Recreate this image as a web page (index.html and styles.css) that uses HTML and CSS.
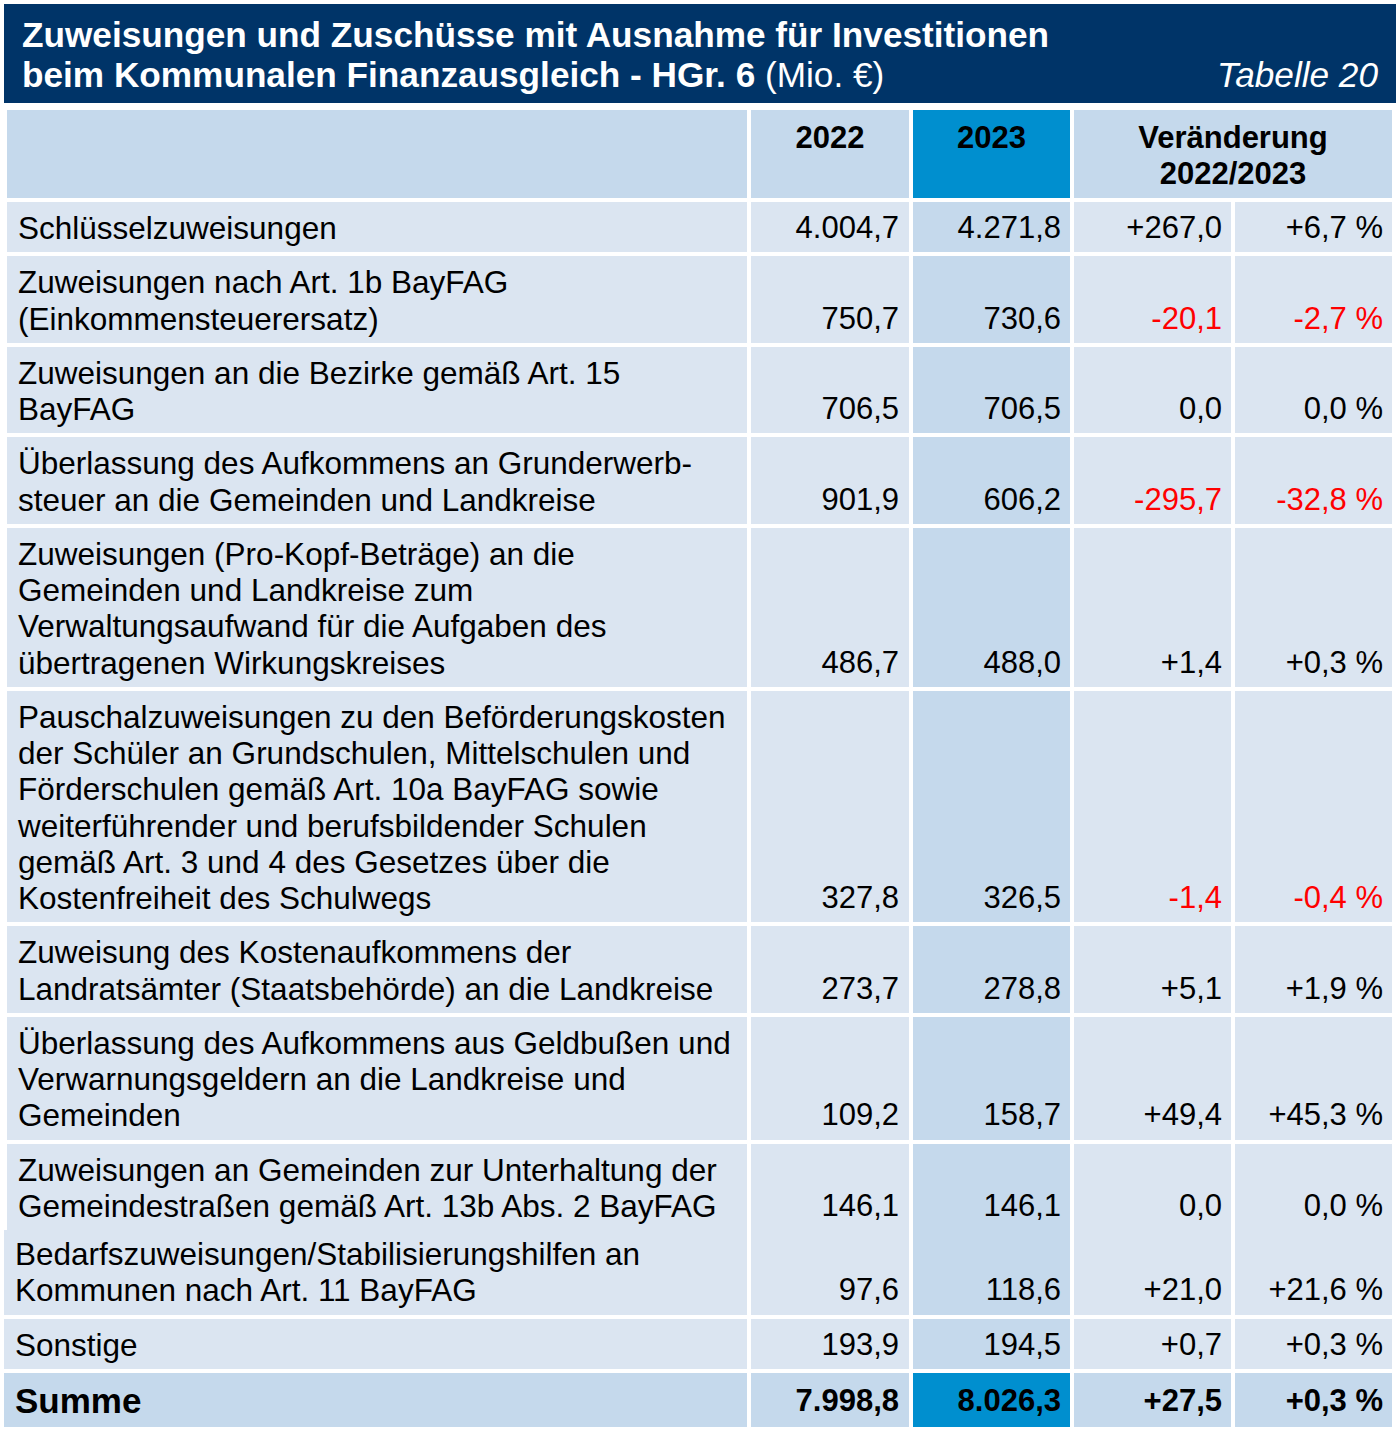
FILE: index.html
```html
<!DOCTYPE html>
<html lang="de">
<head>
<meta charset="utf-8">
<title>Tabelle 20</title>
<link rel="stylesheet" href="styles.css">
</head>
<body>
<div class="page">
  <header class="title">
    <div class="title-line">Zuweisungen und Zuschüsse mit Ausnahme für Investitionen</div>
    <div class="title-line split">
      <span>beim Kommunalen Finanzausgleich - HGr. 6 <span class="unit">(Mio. €)</span></span>
      <span class="tab-no">Tabelle 20</span>
    </div>
  </header>

  <div class="table">
    <div class="row head">
      <div class="cell label"></div>
      <div class="cell hcell">2022</div>
      <div class="cell hcell cur">2023</div>
      <div class="cell hcell span2">Veränderung<br>2022/2023</div>
    </div>

    <div class="row">
      <div class="cell label">Schlüsselzuweisungen</div>
      <div class="cell num c2">4.004,7</div>
      <div class="cell num cur">4.271,8</div>
      <div class="cell num">+267,0</div>
      <div class="cell num">+6,7 %</div>
    </div>

    <div class="row">
      <div class="cell label">Zuweisungen nach Art. 1b BayFAG<br>(Einkommensteuerersatz)</div>
      <div class="cell num c2">750,7</div>
      <div class="cell num cur">730,6</div>
      <div class="cell num neg">-20,1</div>
      <div class="cell num neg">-2,7 %</div>
    </div>

    <div class="row">
      <div class="cell label">Zuweisungen an die Bezirke gemäß Art. 15<br>BayFAG</div>
      <div class="cell num c2">706,5</div>
      <div class="cell num cur">706,5</div>
      <div class="cell num">0,0</div>
      <div class="cell num">0,0 %</div>
    </div>

    <div class="row">
      <div class="cell label">Überlassung des Aufkommens an Grunderwerb-<br>steuer an die Gemeinden und Landkreise</div>
      <div class="cell num c2">901,9</div>
      <div class="cell num cur">606,2</div>
      <div class="cell num neg">-295,7</div>
      <div class="cell num neg">-32,8 %</div>
    </div>

    <div class="row">
      <div class="cell label">Zuweisungen (Pro-Kopf-Beträge) an die<br>Gemeinden und Landkreise zum<br>Verwaltungsaufwand für die Aufgaben des<br>übertragenen Wirkungskreises</div>
      <div class="cell num c2">486,7</div>
      <div class="cell num cur">488,0</div>
      <div class="cell num">+1,4</div>
      <div class="cell num">+0,3 %</div>
    </div>

    <div class="row">
      <div class="cell label">Pauschalzuweisungen zu den Beförderungskosten<br>der Schüler an Grundschulen, Mittelschulen und<br>Förderschulen gemäß Art. 10a BayFAG sowie<br>weiterführender und berufsbildender Schulen<br>gemäß Art. 3 und 4 des Gesetzes über die<br>Kostenfreiheit des Schulwegs</div>
      <div class="cell num c2">327,8</div>
      <div class="cell num cur">326,5</div>
      <div class="cell num neg">-1,4</div>
      <div class="cell num neg">-0,4 %</div>
    </div>

    <div class="row">
      <div class="cell label">Zuweisung des Kostenaufkommens der<br>Landratsämter (Staatsbehörde) an die Landkreise</div>
      <div class="cell num c2">273,7</div>
      <div class="cell num cur">278,8</div>
      <div class="cell num">+5,1</div>
      <div class="cell num">+1,9 %</div>
    </div>

    <div class="row">
      <div class="cell label">Überlassung des Aufkommens aus Geldbußen und<br>Verwarnungsgeldern an die Landkreise und<br>Gemeinden</div>
      <div class="cell num c2">109,2</div>
      <div class="cell num cur">158,7</div>
      <div class="cell num">+49,4</div>
      <div class="cell num">+45,3 %</div>
    </div>

    <div class="row">
      <div class="cell label">Zuweisungen an Gemeinden zur Unterhaltung der<br>Gemeindestraßen gemäß Art. 13b Abs. 2 BayFAG</div>
      <div class="cell num c2">146,1</div>
      <div class="cell num cur">146,1</div>
      <div class="cell num">0,0</div>
      <div class="cell num">0,0 %</div>
    </div>

    <div class="row shifted joined">
      <div class="cell label">Bedarfszuweisungen/Stabilisierungshilfen an<br>Kommunen nach Art. 11 BayFAG</div>
      <div class="cell num c2">97,6</div>
      <div class="cell num cur">118,6</div>
      <div class="cell num">+21,0</div>
      <div class="cell num">+21,6 %</div>
    </div>

    <div class="row shifted">
      <div class="cell label">Sonstige</div>
      <div class="cell num c2">193,9</div>
      <div class="cell num cur">194,5</div>
      <div class="cell num">+0,7</div>
      <div class="cell num">+0,3 %</div>
    </div>

    <div class="row shifted total">
      <div class="cell label">Summe</div>
      <div class="cell num c2">7.998,8</div>
      <div class="cell num cur">8.026,3</div>
      <div class="cell num">+27,5</div>
      <div class="cell num">+0,3 %</div>
    </div>
  </div>
</div>
</body>
</html>
```

FILE: styles.css
```css
html, body {
  margin: 0;
  padding: 0;
  background: #ffffff;
}

body {
  font-family: "Liberation Sans", Arial, sans-serif;
  color: #000000;
}

.page {
  padding: 4px 3px 0 4px;
}

/* ---------- title bar ---------- */
.title {
  background: #003468;
  color: #ffffff;
  padding: 11px 18px 8px 18px;
  font-size: 35.2px;
  line-height: 40px;
  font-weight: bold;
}

.title-line {
  white-space: nowrap;
}

.title-line.split {
  display: flex;
  justify-content: space-between;
}

.unit {
  font-weight: normal;
}

.tab-no {
  font-weight: normal;
  font-style: italic;
}

/* ---------- table ---------- */
.table {
  margin: 7px 1px 0 3px;
  display: flex;
  flex-direction: column;
}

.row {
  display: grid;
  grid-template-columns: 740px 158px 157px 157px 157px;
  column-gap: 4px;
  font-size: 31px;
  line-height: 36.25px;
}

.row + .row {
  margin-top: 4px;
}

.row.joined {
  margin-top: 0;
}

.row.shifted {
  grid-template-columns: 743px 158px 157px 157px 157px;
  margin-left: -3px;
}

.cell {
  background: #dbe5f1;
  padding: 8px 9px 6px 11px;
  white-space: nowrap;
}

.label {
  font-size: 31.5px;
}

.row.joined .cell {
  padding-top: 6px;
}

.cell.cur {
  background: #c5d9ec;
}

.num {
  display: flex;
  align-items: flex-end;
  justify-content: flex-end;
  padding-left: 4px;
}

.num.c2 {
  padding-right: 10px;
}

.neg {
  color: #ff0000;
}

/* header row */
.row.head .cell {
  background: #c5d9ec;
  height: 88px;
  box-sizing: border-box;
  padding: 10px 4px 0 4px;
  font-weight: bold;
  text-align: center;
}

.row.head .cell.cur {
  background: #008fcf;
}

.row.head .span2 {
  grid-column: span 2;
}

/* total row */
.row.total {
  line-height: 40px;
}

.row.total .cell {
  background: #c5d9ec;
  font-weight: bold;
}

.row.total .cell.cur {
  background: #008fcf;
}

.row.total .label {
  font-size: 35px;
}
```
